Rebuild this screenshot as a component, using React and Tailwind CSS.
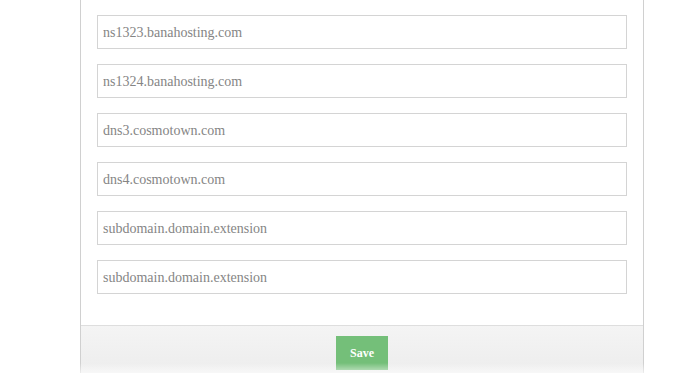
const servers = [
  "ns1323.banahosting.com",
  "ns1324.banahosting.com",
  "dns3.cosmotown.com",
  "dns4.cosmotown.com",
  "subdomain.domain.extension",
  "subdomain.domain.extension",
];

export default function App() {
  return (
    <div
      className="relative h-[373px] w-[680px] overflow-hidden bg-white"
      style={{ fontFamily: '"Liberation Serif", "Times New Roman", serif' }}
    >
      <div className="ml-[80px] flex h-full w-[564px] flex-col border-x border-[#d0d0d0]">
        <div className="flex flex-col gap-[15px] px-4 pt-[15px] pb-[31px]">
          {servers.map((name, i) => (
            <input
              key={i}
              type="text"
              defaultValue={name}
              className="h-[34px] w-full border border-[#d4d4d4] bg-white px-[5px] pt-[2px] text-[14px] text-[#858585] outline-none"
            />
          ))}
        </div>
        <div className="flex flex-1 justify-center border-t border-[#dedede] bg-gradient-to-b from-[#f4f4f4] to-[#ededed] pt-[10px]">
          <button
            type="button"
            className="h-[34px] w-[52px] bg-[#74bf79] text-[12px] font-bold text-white"
          >
            Save
          </button>
        </div>
      </div>
      <div className="pointer-events-none absolute inset-x-0 bottom-0 h-[10px] bg-gradient-to-b from-transparent to-white/60" />
    </div>
  );
}
